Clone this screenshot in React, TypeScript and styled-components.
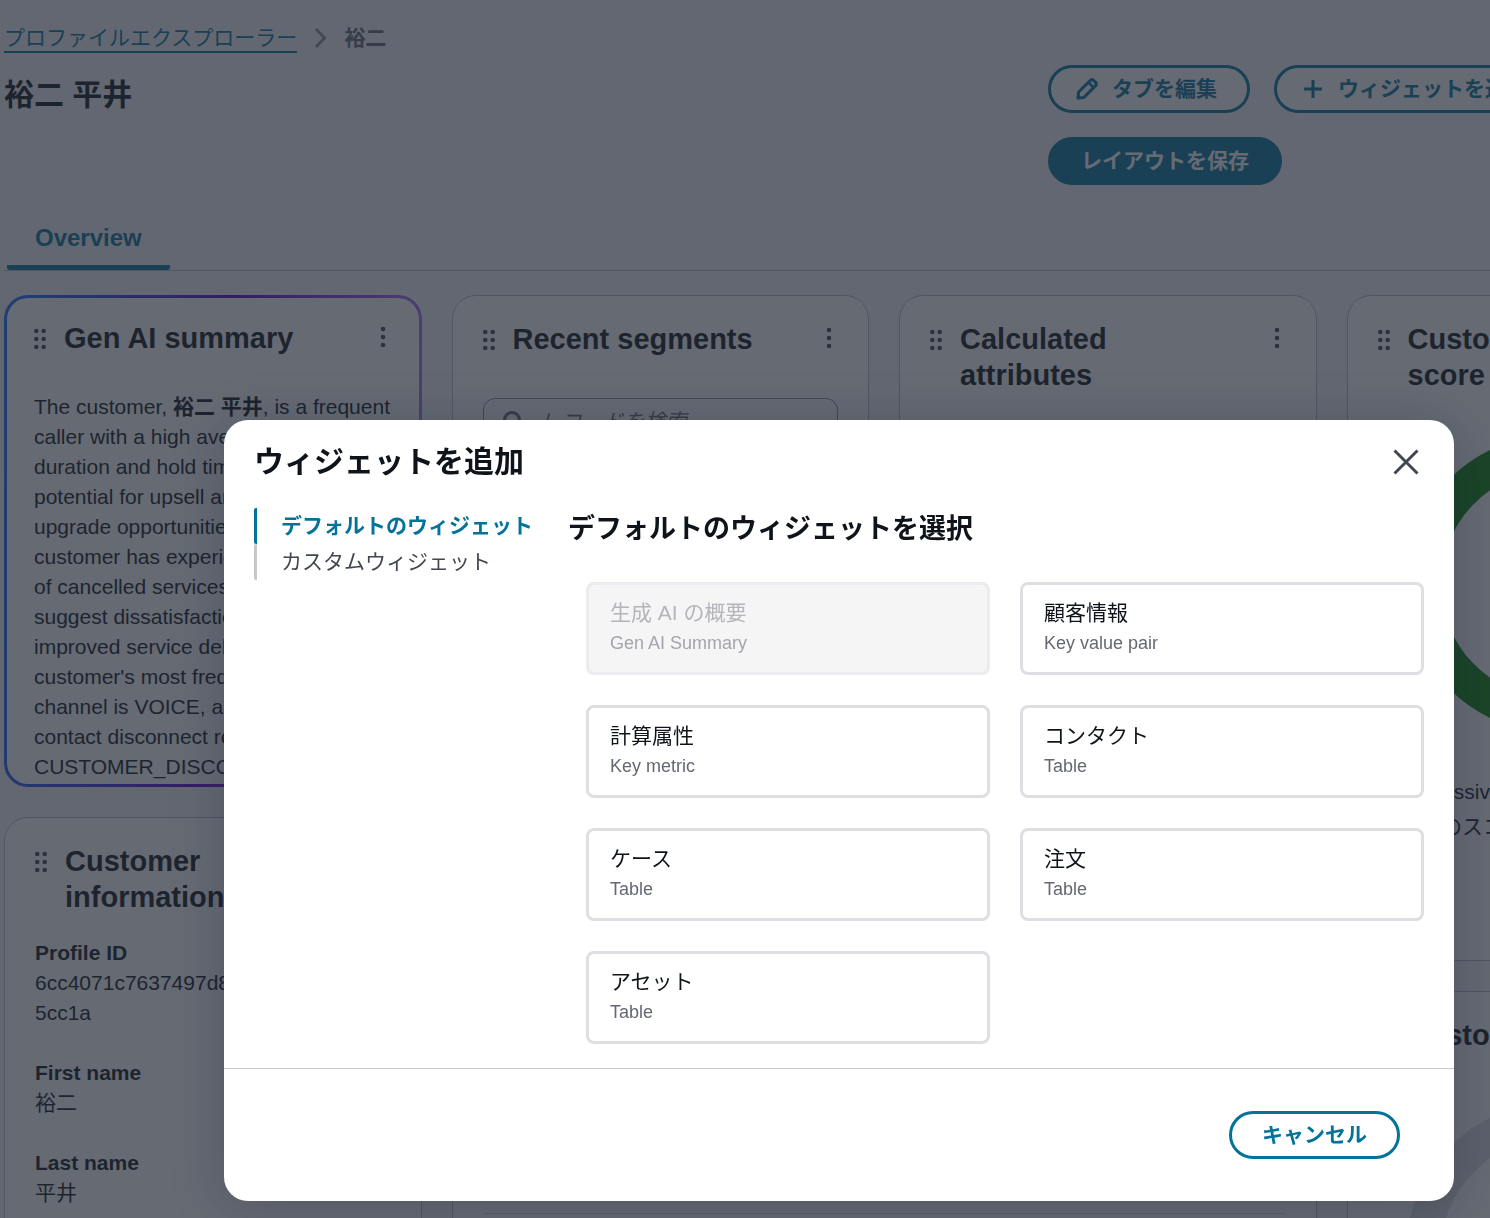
import React from 'react';
import styled, { createGlobalStyle } from 'styled-components';

const teal = '#047399';
const ink = '#0f141a';
const muted = '#424650';
const line = '#b6bec9';

const GlobalStyle = createGlobalStyle`
  *, *::before, *::after { box-sizing: border-box; }
  body {
    margin: 0;
    background: #f6f6f7;
    color: ${ink};
    font-family: "Liberation Sans", "Noto Sans CJK JP", sans-serif;
    font-size: 21px;
    line-height: 30px;
  }
  button, input { font: inherit; }
  h1, h2, h3, p, ul, ol, dl, dd { margin: 0; padding: 0; }
  ul, ol { list-style: none; }
`;

const Viewport = styled.div`
  height: 100vh;
  overflow: hidden;
`;

const Page = styled.main`
  min-width: 1764px;
  padding: 22px 0 0 4px;
`;

const Breadcrumbs = styled.ol`
  display: flex;
  align-items: center;
  gap: 17px;
  height: 31px;
  color: #656871;
  font-weight: 700;

  a {
    display: block;
    height: 31px;
    color: ${teal};
    font-weight: 400;
    line-height: 32px;
    text-decoration: none;
    border-bottom: 2px solid ${teal};
  }
`;

const Crumb = styled.li`
  display: flex;
  align-items: center;
  gap: 17px;
`;

const PageHeader = styled.header`
  display: flex;
  justify-content: space-between;
  align-items: flex-start;
  padding-top: 12px;
`;

const PageTitle = styled.h1`
  padding-top: 12px;
  font-size: 30px;
  line-height: 36px;
`;

const Actions = styled.div`
  display: flex;
  flex: 0 0 716px;
  flex-wrap: wrap;
  gap: 24px;
`;

const Button = styled.button<{ $primary?: boolean; $icon?: boolean }>`
  display: inline-flex;
  align-items: center;
  gap: 13px;
  height: 48px;
  padding: 0 30px 0 ${(p) => (p.$icon ? 24 : 30)}px;
  border: 3px solid ${teal};
  border-radius: 24px;
  background: ${(p) => (p.$primary ? teal : '#fff')};
  color: ${(p) => (p.$primary ? '#fff' : teal)};
  font-weight: 700;
  line-height: 30px;
  white-space: nowrap;
`;

const Tabs = styled.div`
  display: flex;
  margin-top: 38px;
  padding-left: 3px;
  border-bottom: 1px solid ${line};
`;

const Tab = styled.button`
  height: 47px;
  padding: 0 28px 12px;
  border: 0;
  border-bottom: 5px solid ${teal};
  border-radius: 3px;
  background: none;
  color: ${teal};
  font-size: 24px;
  font-weight: 700;
  line-height: 30px;
`;

const Board = styled.div`
  display: grid;
  grid-template-columns: repeat(4, minmax(0, 1fr));
  gap: 30px;
  padding-top: 24px;
`;

const Column = styled.div`
  display: flex;
  flex-direction: column;
  gap: 30px;
`;

const MiddleColumns = styled.div`
  display: grid;
  grid-column: span 2;
  grid-template-columns: repeat(2, minmax(0, 1fr));
  align-content: start;
  gap: 30px;
`;

const Card = styled.section<{ $height: number; $wide?: boolean }>`
  height: ${(p) => p.$height}px;
  overflow: hidden;
  grid-column: ${(p) => (p.$wide ? 'span 2' : 'auto')};
  padding: 25px 30px;
  border: 1px solid ${line};
  border-radius: 24px;
  background: #fff;
`;

const GenAiCard = styled(Card)`
  padding: 22px 27px 0;
  border: 3px solid transparent;
  background:
    linear-gradient(#fff, #fff) padding-box,
    linear-gradient(95deg, #1373ff, #5a00d0 50%, #c084ff) border-box;
`;

const CardHeader = styled.div`
  display: flex;
  align-items: flex-start;
`;

const CardTitle = styled.h2`
  flex: 1;
  font-size: 29px;
  line-height: 36px;
`;

const Handle = styled.button`
  display: flex;
  flex: 0 0 30px;
  align-items: center;
  height: 38px;
  padding: 0;
  border: 0;
  background: none;
  color: ${muted};
`;

const MenuButton = styled.button`
  display: flex;
  flex: 0 0 40px;
  align-items: center;
  justify-content: center;
  height: 34px;
  margin: 0 -11px 0 20px;
  padding: 0;
  border: 0;
  background: none;
  color: ${muted};
`;

const Summary = styled.p`
  margin-top: 34px;
  white-space: pre;
`;

const SearchBox = styled.label`
  display: flex;
  align-items: center;
  gap: 16px;
  height: 48px;
  margin-top: 39px;
  padding: 0 16px;
  border: 1px solid #7d8998;
  border-radius: 12px;
  color: #656871;

  input {
    flex: 1;
    min-width: 0;
    padding: 0;
    border: 0;
    outline: 0;
    background: none;
  }
  input::placeholder {
    color: #656871;
    font-style: italic;
    opacity: 1;
  }
`;

const Details = styled.dl`
  display: grid;
  gap: 30px;
  margin-top: 23px;

  dt { font-weight: 700; }
  dd { overflow-wrap: anywhere; }
`;

const Gauge = styled.div<{ $gap: number }>`
  display: grid;
  justify-items: center;
  margin-top: ${(p) => p.$gap}px;
`;

const GaugeNote = styled.p`
  margin-top: 41px;
  line-height: 35px;
  text-align: center;
  white-space: nowrap;
`;

const TableRule = styled.hr`
  margin: 332px 0 0;
  border: 0;
  border-top: 1px solid #d5dbdb;
`;

const Overlay = styled.div`
  position: fixed;
  inset: 0;
  display: flex;
  align-items: flex-start;
  padding: 420px 36px 0 224px;
  background: rgba(35, 43, 55, 0.7);
`;

const Modal = styled.div`
  flex: 1;
  border-radius: 24px;
  background: #fff;
  box-shadow: 0 6px 54px rgba(15, 20, 40, 0.22);
`;

const ModalHeader = styled.header`
  display: flex;
  align-items: center;
  justify-content: space-between;
  padding: 24px 30px 0;

  h2 {
    font-size: 30px;
    line-height: 36px;
  }
`;

const CloseButton = styled.button`
  display: flex;
  align-items: center;
  justify-content: center;
  width: 36px;
  height: 36px;
  padding: 0;
  border: 0;
  background: none;
  color: ${muted};
`;

const ModalBody = styled.div`
  display: grid;
  grid-template-columns: 314px minmax(0, 1fr);
  padding: 28px 30px 24px;
`;

const NavLink = styled.a<{ $active?: boolean }>`
  display: block;
  height: 36px;
  padding-left: 24px;
  border-left: 3px solid ${(p) => (p.$active ? teal : '#c6c6cd')};
  border-radius: 2px;
  color: ${(p) => (p.$active ? teal : muted)};
  font-weight: ${(p) => (p.$active ? 700 : 400)};
  line-height: 36px;
  text-decoration: none;
  white-space: nowrap;
`;

const SectionTitle = styled.h3`
  font-size: 27px;
  line-height: 42px;
`;

const Options = styled.div`
  display: grid;
  grid-template-columns: repeat(2, minmax(0, 1fr));
  gap: 30px;
  margin-top: 32px;
  padding-left: 18px;
`;

const Option = styled.button`
  display: grid;
  padding: 13px 21px 14px;
  border: 3px solid #dedee3;
  border-radius: 8px;
  background: #fff;
  color: ${ink};
  line-height: 30px;
  text-align: left;

  small {
    color: #656871;
    font-size: 18px;
  }

  &:disabled {
    border-color: #ebebf0;
    background: #f5f5f5;
    color: #b4b4bb;
  }
  &:disabled small { color: #a4a4ad; }
`;

const ModalFooter = styled.footer`
  display: flex;
  justify-content: flex-end;
  padding: 42px 54px;
  border-top: 1px solid #c6c6cd;
`;

function HandleIcon() {
  return (
    <svg width="14" height="22" viewBox="0 0 14 22" fill="currentColor" aria-hidden="true">
      {[3, 11, 19].map((y) => (
        <React.Fragment key={y}>
          <circle cx="2.3" cy={y} r="2.3" />
          <circle cx="9.7" cy={y} r="2.3" />
        </React.Fragment>
      ))}
    </svg>
  );
}

function MenuIcon() {
  return (
    <svg width="6" height="22" viewBox="0 0 6 22" fill="currentColor" aria-hidden="true">
      {[3, 11, 19].map((y) => (
        <circle key={y} cx="3" cy={y} r="2.3" />
      ))}
    </svg>
  );
}

function PencilIcon() {
  return (
    <svg width="24" height="24" viewBox="0 0 24 24" fill="none" stroke="currentColor" strokeWidth="3" strokeLinejoin="round" aria-hidden="true">
      <path d="M3 21l.6-6L15.4 3.400a2.300 2.300 0 0 1 3.200 0l2 2a2.300 2.300 0 0 1 0 3.200L9 20.400z" />
      <path d="M13.500 5.500l5 5" strokeWidth="2.500" />
    </svg>
  );
}

function PlusIcon() {
  return (
    <svg width="24" height="24" viewBox="0 0 24 24" stroke="currentColor" strokeWidth="3" aria-hidden="true">
      <path d="M12 3v18M3 12h18" />
    </svg>
  );
}

function ChevronIcon() {
  return (
    <svg width="13" height="22" viewBox="0 0 13 22" fill="none" stroke="#8c8c94" strokeWidth="3" aria-hidden="true">
      <path d="M2 2l8.500 9L2 20" />
    </svg>
  );
}

function SearchIcon() {
  return (
    <svg width="24" height="24" viewBox="0 0 24 24" fill="none" stroke="currentColor" strokeWidth="3" aria-hidden="true">
      <circle cx="12" cy="10" r="7.500" />
      <path d="M17 15.500l5 5.500" />
    </svg>
  );
}

function CloseIcon() {
  return (
    <svg width="26" height="26" viewBox="0 0 26 26" stroke="currentColor" strokeWidth="3" aria-hidden="true">
      <path d="M1.500 1.500l23 23M24.500 1.500l-23 23" />
    </svg>
  );
}

function Ring({ color }: { color: string }) {
  return (
    <svg width="298" height="298" viewBox="0 0 298 298" fill="none" aria-hidden="true">
      <circle cx="149" cy="149" r="131.500" stroke={color} strokeWidth="35" />
    </svg>
  );
}

function WidgetHeader({ title }: { title: string }) {
  return (
    <CardHeader>
      <Handle type="button" aria-label="Drag"><HandleIcon /></Handle>
      <CardTitle>{title}</CardTitle>
      <MenuButton type="button" aria-label="Menu"><MenuIcon /></MenuButton>
    </CardHeader>
  );
}

const summaryRest = [
  'caller with a high average call',
  'duration and hold time, with a',
  'potential for upsell and service',
  'upgrade opportunities. The',
  'customer has experienced a lot',
  'of cancelled services, which may',
  'suggest dissatisfaction and need',
  'improved service delivery. The',
  "customer's most frequent contact",
  'channel is VOICE, and the last',
  'contact disconnect reason is',
  'CUSTOMER_DISCONNECT.',
].join('\n');

const options = [
  { name: '生成 AI の概要', type: 'Gen AI Summary', disabled: true },
  { name: '顧客情報', type: 'Key value pair' },
  { name: '計算属性', type: 'Key metric' },
  { name: 'コンタクト', type: 'Table' },
  { name: 'ケース', type: 'Table' },
  { name: '注文', type: 'Table' },
  { name: 'アセット', type: 'Table' },
];

export default function App() {
  return (
    <>
      <GlobalStyle />
      <Viewport>
        <Page>
          <nav>
            <Breadcrumbs>
              <Crumb>
                <a href="#profiles">プロファイルエクスプローラー</a>
                <ChevronIcon />
              </Crumb>
              <Crumb>裕二</Crumb>
            </Breadcrumbs>
          </nav>
          <PageHeader>
            <PageTitle>裕二 平井</PageTitle>
            <Actions>
              <Button type="button" $icon><PencilIcon />タブを編集</Button>
              <Button type="button" $icon><PlusIcon />ウィジェットを追加</Button>
              <Button type="button" $primary>レイアウトを保存</Button>
            </Actions>
          </PageHeader>
          <Tabs role="tablist">
            <Tab type="button" role="tab" aria-selected="true">Overview</Tab>
          </Tabs>
          <Board>
            <Column>
              <GenAiCard $height={492}>
                <WidgetHeader title="Gen AI summary" />
                <Summary>
                  The customer, <b>裕二 平井</b>, is a frequent{'\n'}
                  {summaryRest}
                </Summary>
              </GenAiCard>
              <Card $height={492}>
                <WidgetHeader title="Customer information" />
                <Details>
                  <div>
                    <dt>Profile ID</dt>
                    <dd>6cc4071c7637497d8e2f3a9b40d71e05cc1a</dd>
                  </div>
                  <div>
                    <dt>First name</dt>
                    <dd>裕二</dd>
                  </div>
                  <div>
                    <dt>Last name</dt>
                    <dd>平井</dd>
                  </div>
                </Details>
              </Card>
            </Column>
            <MiddleColumns>
              <Card $height={492}>
                <WidgetHeader title="Recent segments" />
                <SearchBox>
                  <SearchIcon />
                  <input type="search" placeholder="レコードを検索" aria-label="レコードを検索" />
                </SearchBox>
              </Card>
              <Card $height={492}>
                <WidgetHeader title="Calculated attributes" />
              </Card>
              <Card $height={492} $wide>
                <WidgetHeader title="Contacts" />
                <TableRule />
              </Card>
            </MiddleColumns>
            <Column>
              <Card $height={666}>
                <WidgetHeader title="Customer progress score" />
                <Gauge $gap={42}>
                  <Ring color="#088208" />
                  <GaugeNote>
                    Progressive rating for all customers<br />
                    顧客のスコアは上昇しています。
                  </GaugeNote>
                </Gauge>
              </Card>
              <Card $height={492}>
                <WidgetHeader title="Customer value" />
                <Gauge $gap={48}>
                  <Ring color="#dedee3" />
                </Gauge>
              </Card>
            </Column>
          </Board>
        </Page>
      </Viewport>
      <Overlay>
        <Modal role="dialog" aria-modal="true" aria-labelledby="add-widget-title">
          <ModalHeader>
            <h2 id="add-widget-title">ウィジェットを追加</h2>
            <CloseButton type="button" aria-label="閉じる"><CloseIcon /></CloseButton>
          </ModalHeader>
          <ModalBody>
            <nav>
              <ul>
                <li><NavLink href="#default" $active>デフォルトのウィジェット</NavLink></li>
                <li><NavLink href="#custom">カスタムウィジェット</NavLink></li>
              </ul>
            </nav>
            <section>
              <SectionTitle>デフォルトのウィジェットを選択</SectionTitle>
              <Options>
                {options.map((option) => (
                  <Option key={option.name} type="button" disabled={option.disabled}>
                    <span>{option.name}</span>
                    <small>{option.type}</small>
                  </Option>
                ))}
              </Options>
            </section>
          </ModalBody>
          <ModalFooter>
            <Button type="button">キャンセル</Button>
          </ModalFooter>
        </Modal>
      </Overlay>
    </>
  );
}
